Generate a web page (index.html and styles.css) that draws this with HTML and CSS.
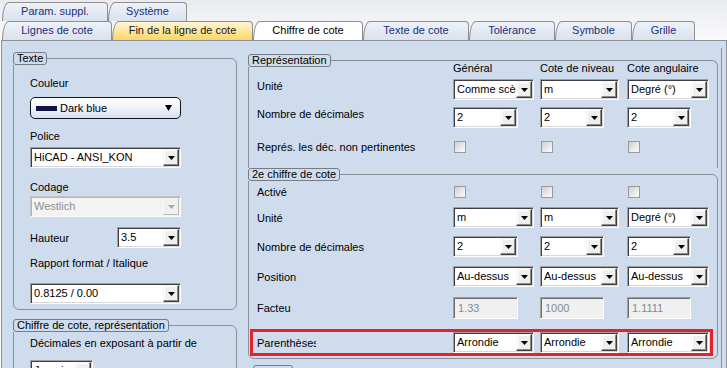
FILE: index.html
```html
<!DOCTYPE html>
<html>
<head>
<meta charset="utf-8">
<link rel="stylesheet" href="styles.css">
</head>
<body>
<div class="tabs">
  <div class="tabrow">
    <div class="tab t-param">Param. suppl.</div>
    <div class="tab t-sys">Système</div>
  </div>
  <div class="tabrow">
    <div class="tab t-lig">Lignes de cote</div>
    <div class="tab t-fin hover">Fin de la ligne de cote</div>
    <div class="tab t-chif active">Chiffre de cote</div>
    <div class="tab t-txt">Texte de cote</div>
    <div class="tab t-tol">Tolérance</div>
    <div class="tab t-sym">Symbole</div>
    <div class="tab t-gri">Grille</div>
  </div>
</div>
<div class="panel">
  <div class="col-left">
    <fieldset class="group g-texte">
      <legend>Texte</legend>
      <div class="gbody">
        <div class="lbl mt11">Couleur</div>
        <div class="colorcombo mt7"><span class="swatch"></span><span class="cval">Dark blue</span><span class="carrow"></span></div>
        <div class="lbl mt10">Police</div>
        <div class="combo w151 mt4"><span class="val">HiCAD - ANSI_KON</span><span class="btn"></span></div>
        <div class="lbl mt12">Codage</div>
        <div class="combo w151 mt2 disabled"><span class="val">Westlich</span><span class="btn"></span></div>
        <div class="hrow mt10"><span class="lbl">Hauteur</span><div class="combo w64"><span class="val">3.5</span><span class="btn"></span></div></div>
        <div class="lbl mt8">Rapport format / Italique</div>
        <div class="combo w151 mt13"><span class="val">0.8125 / 0.00</span><span class="btn"></span></div>
      </div>
    </fieldset>
    <fieldset class="group g-repr">
      <legend>Chiffre de cote, représentation</legend>
      <div class="gbody">
        <div class="lbl mt4">Décimales en exposant à partir de</div>
        <div class="combo w63 mt10"><span class="val">Jamais</span><span class="btn"></span></div>
      </div>
    </fieldset>
  </div>
  <div class="col-right">
    <fieldset class="group g-rep">
      <legend>Représentation</legend>
      <div class="rbody b1">
        <div class="grow head"><span></span><span>Général</span><span>Cote de niveau</span><span>Cote angulaire</span></div>
        <div class="grow r21 mt4">
          <span class="lbl raise">Unité</span>
          <div class="combo w81"><span class="val">Comme scène</span><span class="btn"></span></div>
          <div class="combo w79"><span class="val">m</span><span class="btn"></span></div>
          <div class="combo w82"><span class="val">Degré (°)</span><span class="btn"></span></div>
        </div>
        <div class="grow r21 mt7">
          <span class="lbl raise">Nombre de décimales</span>
          <div class="combo w65"><span class="val">2</span><span class="btn"></span></div>
          <div class="combo w64"><span class="val">2</span><span class="btn"></span></div>
          <div class="combo w64"><span class="val">2</span><span class="btn"></span></div>
        </div>
        <div class="grow r14 mt12">
          <span class="lbl">Représ. les déc. non pertinentes</span>
          <span class="chk"></span><span class="chk"></span><span class="chk"></span>
        </div>
      </div>
    </fieldset>
    <fieldset class="group g-2e">
      <legend>2e chiffre de cote</legend>
      <div class="rbody b2">
        <div class="grow r14 mt4">
          <span class="lbl">Activé</span>
          <span class="chk"></span><span class="chk"></span><span class="chk"></span>
        </div>
        <div class="grow r21 mt8">
          <span class="lbl">Unité</span>
          <div class="combo w81"><span class="val">m</span><span class="btn"></span></div>
          <div class="combo w79"><span class="val">m</span><span class="btn"></span></div>
          <div class="combo w82"><span class="val">Degré (°)</span><span class="btn"></span></div>
        </div>
        <div class="grow r21 mt8">
          <span class="lbl">Nombre de décimales</span>
          <div class="combo w65"><span class="val">2</span><span class="btn"></span></div>
          <div class="combo w64"><span class="val">2</span><span class="btn"></span></div>
          <div class="combo w64"><span class="val">2</span><span class="btn"></span></div>
        </div>
        <div class="grow r21 mt9">
          <span class="lbl">Position</span>
          <div class="combo w81"><span class="val">Au-dessus</span><span class="btn"></span></div>
          <div class="combo w79"><span class="val">Au-dessus</span><span class="btn"></span></div>
          <div class="combo w82"><span class="val">Au-dessus</span><span class="btn"></span></div>
        </div>
        <div class="grow r22 mt10">
          <span class="lbl">Facteu</span>
          <div class="tinput w65">1.33</div>
          <div class="tinput w64">1000</div>
          <div class="tinput w64">1.1111</div>
        </div>
        <div class="grow r21 mt10 hl">
          <span class="lbl clip">Parenthèses</span>
          <div class="combo w81"><span class="val">Arrondie</span><span class="btn"></span></div>
          <div class="combo w79"><span class="val">Arrondie</span><span class="btn"></span></div>
          <div class="combo w82"><span class="val">Arrondie</span><span class="btn"></span></div>
        </div>
      </div>
    </fieldset>
    <fieldset class="group g-next"><legend class="empty"></legend></fieldset>
  </div>
</div>
</body>
</html>
```

FILE: styles.css
```css
* { box-sizing: border-box; }
html, body { margin: 0; padding: 0; }
body {
  width: 727px;
  height: 368px;
  overflow: hidden;
  font-family: "Liberation Sans", Arial, sans-serif;
  font-size: 11px;
  color: #000;
  background: linear-gradient(#e9ebef, #fafafb 40px);
}

/* ---------- tabs ---------- */
.tabs { padding: 2px 0 0 2px; }
.tabrow { display: flex; height: 19px; }
.tab {
  height: 19px;
  border: 1px solid #8f8f8f;
  border-bottom: none;
  border-radius: 7px 4px 0 0 / 18px 4px 0 0;
  background: linear-gradient(#eef2f8, #d9e2ee);
  font-family: "Liberation Sans Narrow", "Liberation Sans", sans-serif;
  font-size: 11px;
  line-height: 17px;
  color: #1b2d7a;
  text-align: center;
  white-space: nowrap;
}
.tab.hover { background: linear-gradient(#fff6d6, #ffe7a0 50%, #fcd566); color: #1a1a1a; }
.tab.active { background: #fff; color: #000; }
.t-param { width: 106px; }
.t-sys { width: 79px; }
.t-lig { width: 110px; }
.t-fin { width: 141px; }
.t-chif { width: 110px; }
.t-txt { width: 106px; }
.t-tol { width: 86px; }
.t-sym { width: 77px; }
.t-gri { width: 63px; }

/* ---------- panel ---------- */
.panel {
  display: flex;
  align-items: flex-start;
  margin-left: 1px;
  width: 726px;
  height: 328px;
  border: 1px solid #8e9096;
  border-bottom: none;
  background: #cfdcee;
  padding: 11px 4px 0 11px;
  overflow: hidden;
}
.col-left { width: 224px; flex: none; }
.col-right {
  width: 474px;
  flex: none;
  margin-left: 11px;
  margin-top: -4px;
  padding-top: 6px;
  padding-right: 3px;
  height: 330px;
  border-right: 1px solid #8e9096;
}

/* ---------- group boxes ---------- */
.group {
  margin: 0;
  padding: 0;
  min-width: 0;
  border: 1px solid #8b9098;
  border-radius: 6px;
}
.group legend {
  padding: 0 3px;
  margin-left: -1px;
  border: 1px solid #777b82;
  border-radius: 3px;
  line-height: 11px;
  white-space: nowrap;
}
.group legend.empty { width: 40px; height: 13px; margin-left: 4px; }
.gbody { padding: 0 0 5px 16px; }
.g-repr { margin-top: 9px; }
.g-rep { border-bottom: none; border-radius: 6px 6px 0 0; padding-bottom: 14px; }
.g-2e { padding-bottom: 2px; }
.g-next { margin-top: 6px; height: 40px; }

.lbl { display: block; line-height: 14px; height: 14px; white-space: nowrap; }
.mt2 { margin-top: 2px; }
.mt4 { margin-top: 4px; }
.mt7 { margin-top: 7px; }
.mt8 { margin-top: 8px; }
.mt9 { margin-top: 9px; }
.mt10 { margin-top: 10px; }
.mt11 { margin-top: 11px; }
.mt12 { margin-top: 12px; }
.mt13 { margin-top: 13px; }

.hrow { display: flex; justify-content: space-between; align-items: center; width: 151px; }

/* ---------- combo boxes ---------- */
.combo {
  display: flex;
  height: 21px;
  padding: 1px;
  border: 1px solid;
  border-color: #a0a0a0 #ffffff #ffffff #a0a0a0;
  box-shadow: inset 1px 1px #404040, inset -1px -1px #d8d8d8;
  background: #fff;
}
.combo .val {
  flex: 1;
  min-width: 0;
  overflow: hidden;
  white-space: nowrap;
  line-height: 17px;
  padding-left: 2px;
}
.combo .btn {
  position: relative;
  flex: none;
  width: 16px;
  height: 17px;
  background: #efefef;
  border: 1px solid;
  border-color: #f4f4f4 #404040 #404040 #f4f4f4;
  box-shadow: inset -1px -1px #8a8a8a, inset 1px 1px #ffffff;
}
.combo .btn::after {
  content: "";
  position: absolute;
  left: 4px;
  top: 6px;
  width: 7px;
  height: 4px;
  background: #000;
  clip-path: polygon(0 0, 100% 0, 50% 100%);
}
.combo.disabled {
  background: #f3f3f3;
  border-color: #c4c4c4 #fafafa #fafafa #c4c4c4;
  box-shadow: inset 1px 1px #b4b4b4;
  color: #8e8e8e;
}
.combo.disabled .btn { border-color: #f8f8f8 #b8b8b8 #b8b8b8 #f8f8f8; box-shadow: none; background: #f0f0f0; }
.combo.disabled .btn::after { background: #a8a8a8; }

.w151 { width: 151px; }
.w64 { width: 64px; }
.w63 { width: 63px; }
.w65 { width: 65px; }
.w79 { width: 79px; }
.w81 { width: 81px; }
.w82 { width: 82px; }

.colorcombo {
  display: flex;
  align-items: center;
  width: 151px;
  height: 22px;
  border: 1px solid #141414;
  border-radius: 5px;
  background: linear-gradient(#fdfdfe, #f1f5fa 45%, #d4e0f0);
  padding: 0 8px 0 5px;
}
.swatch { flex: none; width: 21px; height: 5px; background: #0e1246; }
.cval { flex: 1; margin-left: 3px; line-height: 14px; }
.carrow {
  flex: none;
  width: 7px;
  height: 6px;
  background: #000;
  clip-path: polygon(0 0, 100% 0, 50% 100%);
}

/* ---------- right grid rows ---------- */
.rbody { padding-left: 8px; }
.grow {
  display: grid;
  grid-template-columns: 196px 87px 87px 82px;
  align-items: center;
  width: 452px;
}
.grow.head { margin-top: -6px; line-height: 14px; height: 14px; white-space: nowrap; }
.r21 { height: 21px; }
.r22 { height: 22px; }
.r14 { height: 14px; }
.lbl.raise { align-self: start; }
.lbl.clip { width: 59px; overflow: hidden; }

.chk {
  display: block;
  width: 12px;
  height: 12px;
  margin-left: 1px;
  border: 1px solid #9a9a9a;
  background: linear-gradient(135deg, #cdcdcd, #ececec 60%, #fbfbfb);
}

.tinput {
  height: 22px;
  border: 1px solid;
  border-color: #a0a0a0 #ffffff #ffffff #a0a0a0;
  box-shadow: inset 1px 1px #6e6e6e;
  background: #f0f0f0;
  color: #838b93;
  padding-left: 4px;
  line-height: 20px;
}

.hl {
  width: 463px;
  height: 27px;
  margin-left: -7px;
  padding: 0 1px 0 4px;
  border: 3px solid #e3232b;
}
```
